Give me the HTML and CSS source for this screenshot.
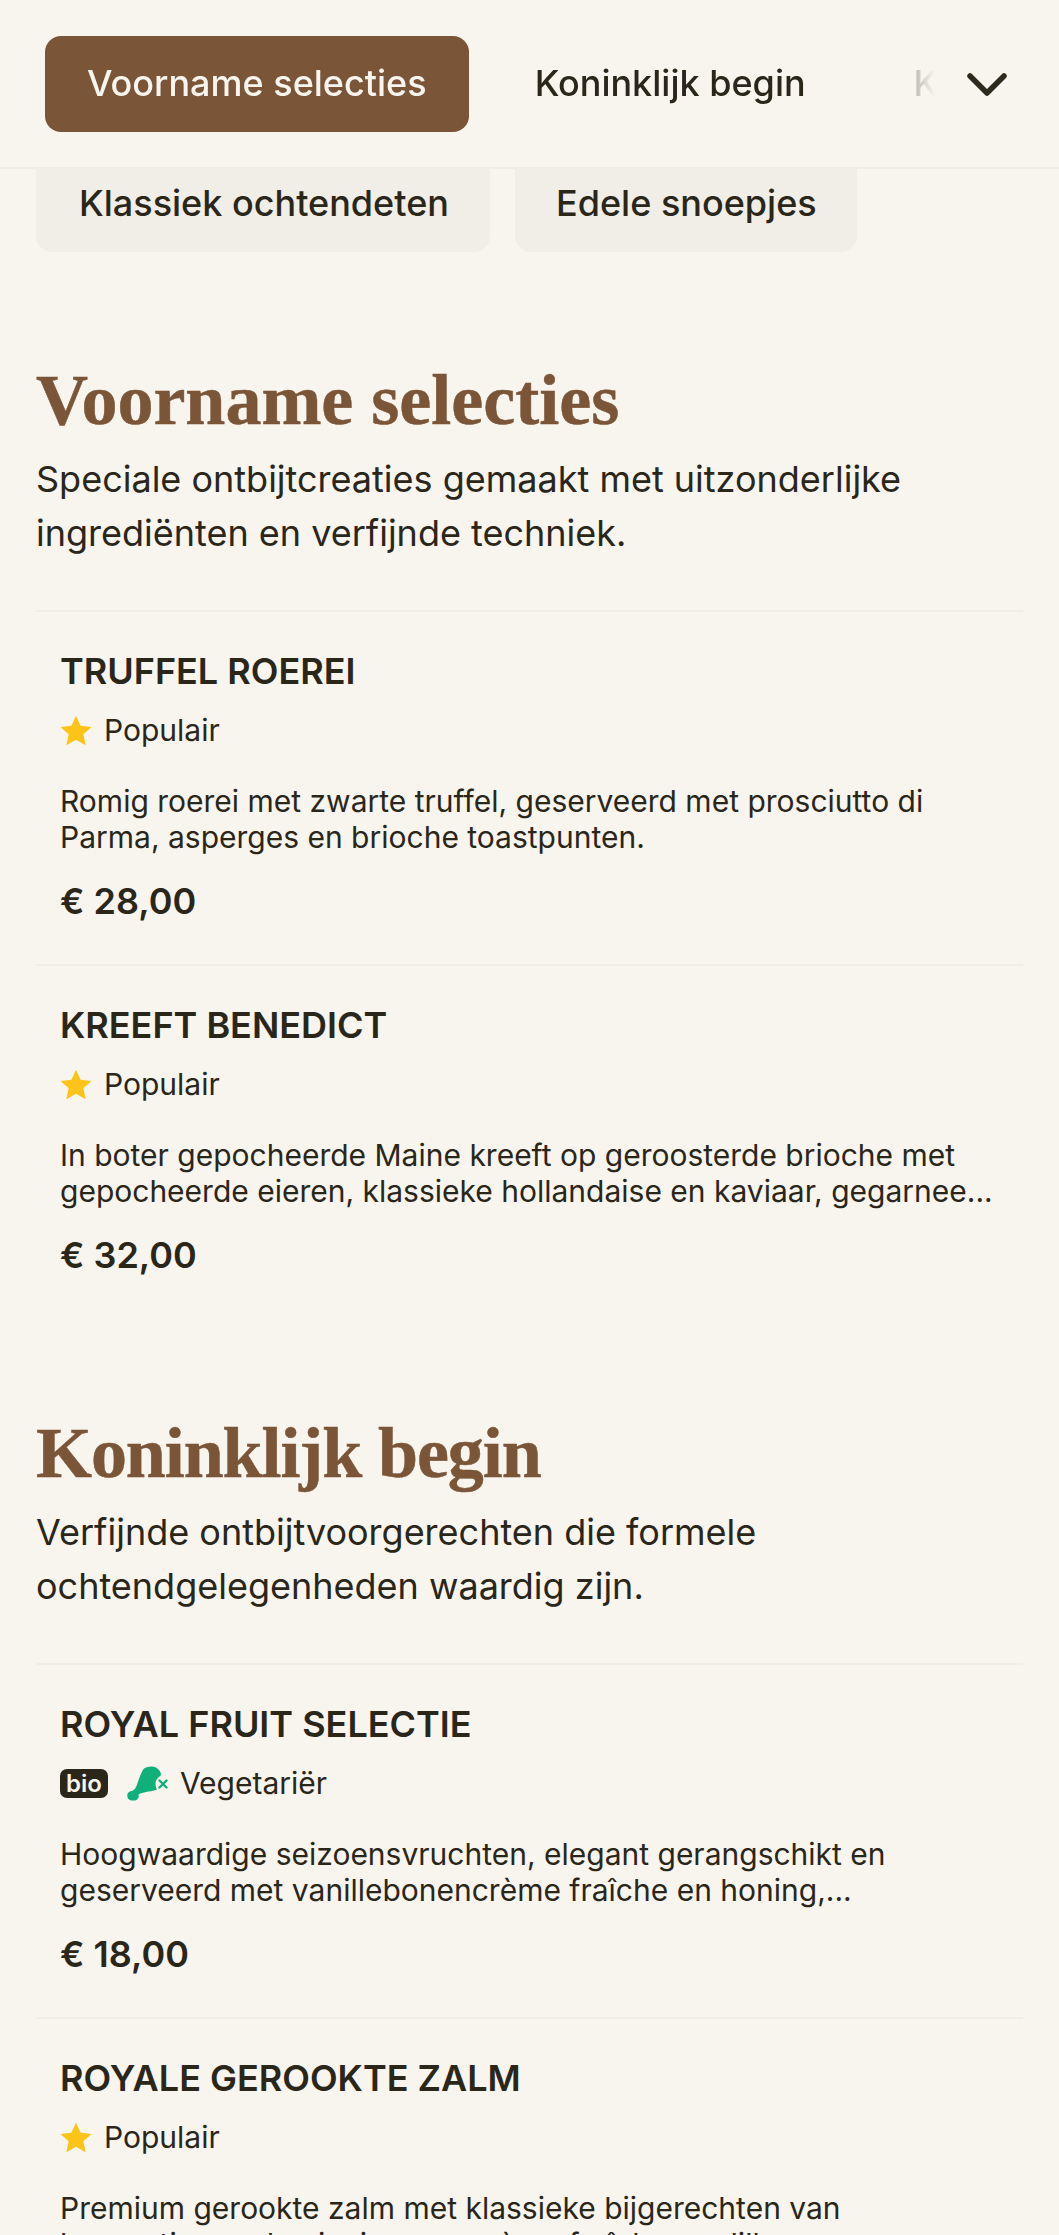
FILE: index.html
```html
<!DOCTYPE html>
<html lang="nl">
<head>
  <meta charset="UTF-8" />
  <title>Menu</title>
  <link rel="stylesheet" href="styles.css">
</head>
<body>
  <header class="topbar">
    <nav class="tabs">
      <a class="tab active" href="#voorname">Voorname selecties</a>
      <a class="tab" href="#koninklijk">Koninklijk begin</a>
      <a class="tab" href="#">Klassiek ochtendeten</a>
    </nav>
    <button class="more" aria-label="Meer">
      <svg viewBox="0 0 40 24" width="40" height="24"><path d="M3 3 L20 20 L37 3" fill="none" stroke="#2e2a1e" stroke-width="5.500" stroke-linecap="round" stroke-linejoin="round"/></svg>
    </button>
  </header>

  <div class="chips">
    <a class="chip" href="#">Klassiek ochtendeten</a>
    <a class="chip" href="#">Edele snoepjes</a>
  </div>

  <main>
    <section class="menu-section" id="voorname">
      <h2>Voorname selecties</h2>
      <p class="intro">Speciale ontbijtcreaties gemaakt met uitzonderlijke ingrediënten en verfijnde techniek.</p>

      <article class="dish">
        <h3>TRUFFEL ROEREI</h3>
        <div class="tags">
          <svg class="star" viewBox="1 1 22 21.500"><path d="M12 1.500l3.200 7 7.600.8-5.700 5.100 1.600 7.500L12 18.100l-6.700 3.800 1.600-7.500L1.200 9.300l7.600-.8z"/></svg>
          <span>Populair</span>
        </div>
        <p class="desc">Romig roerei met zwarte truffel, geserveerd met prosciutto di Parma, asperges en brioche toastpunten.</p>
        <div class="price">€ 28,00</div>
      </article>

      <article class="dish">
        <h3>KREEFT BENEDICT</h3>
        <div class="tags">
          <svg class="star" viewBox="1 1 22 21.500"><path d="M12 1.500l3.200 7 7.600.8-5.700 5.100 1.600 7.500L12 18.100l-6.700 3.800 1.600-7.500L1.200 9.300l7.600-.8z"/></svg>
          <span>Populair</span>
        </div>
        <p class="desc">In boter gepocheerde Maine kreeft op geroosterde brioche met gepocheerde eieren, klassieke hollandaise en kaviaar, gegarnee...</p>
        <div class="price">€ 32,00</div>
      </article>
    </section>

    <section class="menu-section" id="koninklijk">
      <h2>Koninklijk begin</h2>
      <p class="intro">Verfijnde ontbijtvoorgerechten die formele ochtendgelegenheden waardig zijn.</p>

      <article class="dish">
        <h3>ROYAL FRUIT SELECTIE</h3>
        <div class="tags">
          <span class="bio">bio</span>
          <svg class="veg" viewBox="0 0 41 35">
            <path d="M16.500 3C19 .5 25-.5 29 1.500 32 3 34 6 34 9L32 11C29.500 13 28.500 15 28.500 18 28.500 20 29 22 30 23.500 26 25 22 25.500 19 26 16.500 26.500 13.500 27 11.500 28.500 12.500 31.500 10 35 6.500 34.500 4 35 .5 33.500 .5 31-.5 28 1.500 25.500 4.500 25 6.500 24.500 8 23 9 21 11 17 13 8 16.500 3Z" fill="#10b07a"/>
            <path d="M32.500 14.500l7 7M39.500 14.500l-7 7" stroke="#10b07a" stroke-width="2.400" stroke-linecap="round"/>
          </svg>
          <span>Vegetariër</span>
        </div>
        <p class="desc">Hoogwaardige seizoensvruchten, elegant gerangschikt en geserveerd met vanillebonencrème fraîche en honing,...</p>
        <div class="price">€ 18,00</div>
      </article>

      <article class="dish">
        <h3>ROYALE GEROOKTE ZALM</h3>
        <div class="tags">
          <svg class="star" viewBox="1 1 22 21.500"><path d="M12 1.500l3.200 7 7.600.8-5.700 5.100 1.600 7.500L12 18.100l-6.700 3.800 1.600-7.500L1.200 9.300l7.600-.8z"/></svg>
          <span>Populair</span>
        </div>
        <p class="desc">Premium gerookte zalm met klassieke bijgerechten van kappertjes, rode ui, ei, verse crème fraîche en dille...</p>
        <div class="price">€ 26,00</div>
      </article>
    </section>
  </main>
</body>
</html>
```

FILE: styles.css
```css
html, body {
  margin: 0;
  padding: 0;
  height: 100%;
  overflow: hidden;
  font-family: Inter, "Liberation Sans", sans-serif;
  color: #2a261a;
  background-color: #f8f5ef;
}

.topbar {
  position: relative;
  z-index: 20;
  height: 169px;
  box-sizing: border-box;
  display: flex;
  align-items: center;
  padding: 0 50px 0 45px;
  background-color: #f8f5ef;
  border-bottom: 2px solid #f1eee8;
}

.tabs {
  display: flex;
  align-items: center;
  flex: 1;
  min-width: 0;
  overflow: hidden;
  gap: 24px;
  -webkit-mask-image: linear-gradient(to right, #000 calc(100% - 75px), transparent);
  mask-image: linear-gradient(to right, #000 calc(100% - 75px), transparent);
}

.tab {
  flex: none;
  font-size: 36px;
  font-weight: 500;
  color: #2a261a;
  text-decoration: none;
  padding: 0 42px;
  height: 96px;
  line-height: 94px;
  border-radius: 16px;
}

.tab.active {
  color: #f8f5ef;
  background-color: #7b5538;
}

.more {
  flex: none;
  display: flex;
  align-items: center;
  justify-content: center;
  width: 44px;
  height: 44px;
  margin: 2px 0 0 30px;
  padding: 0;
  border: none;
  background: none;
}

.chips {
  display: flex;
  gap: 25px;
  margin-top: -13px;
  padding: 0 36px;
}

.chip {
  height: 96px;
  line-height: 94px;
  padding: 0 41px 0 43px;
  font-size: 36px;
  font-weight: 500;
  color: #2a261a;
  text-decoration: none;
  border-radius: 16px;
  background-color: #f1eee8;
}

.chip + .chip {
  padding: 0 40px 0 41px;
}

main {
  padding-top: 13px;
}

.menu-section {
  padding: 0 36px;
  margin-top: 93px;
}

.menu-section h2 {
  margin: 0;
  font-family: "Liberation Serif", serif;
  font-size: 72px;
  line-height: 84px;
  font-weight: 700;
  color: #7b5538;
  -webkit-text-stroke: 0.5px #7b5538;
}

#koninklijk h2 {
  letter-spacing: -1.1px;
}

.intro {
  margin: 10px 0 50px;
  font-size: 36px;
  line-height: 54px;
}

.dish {
  border-top: 2px solid #f1eee8;
  padding: 37px 24px 41px;
}

.dish h3 {
  margin: 0;
  font-size: 36px;
  line-height: 44px;
  font-weight: 600;
}

.tags {
  display: flex;
  align-items: center;
  gap: 12px;
  margin-top: 17px;
  font-size: 30px;
  line-height: 40px;
}

.star {
  width: 32px;
  height: 31px;
  fill: #fcc419;
}

.veg {
  width: 41px;
  height: 35px;
}

.bio {
  margin-right: 7px;
  padding: 0 6px;
  font-size: 24px;
  line-height: 29px;
  font-weight: 600;
  color: #f8f5ef;
  background-color: #2a261a;
  border-radius: 7px;
}

.desc {
  margin: 33px 0 0;
  font-size: 30px;
  line-height: 36px;
}

.price {
  margin-top: 24px;
  font-size: 36px;
  line-height: 44px;
  font-weight: 600;
}
```
